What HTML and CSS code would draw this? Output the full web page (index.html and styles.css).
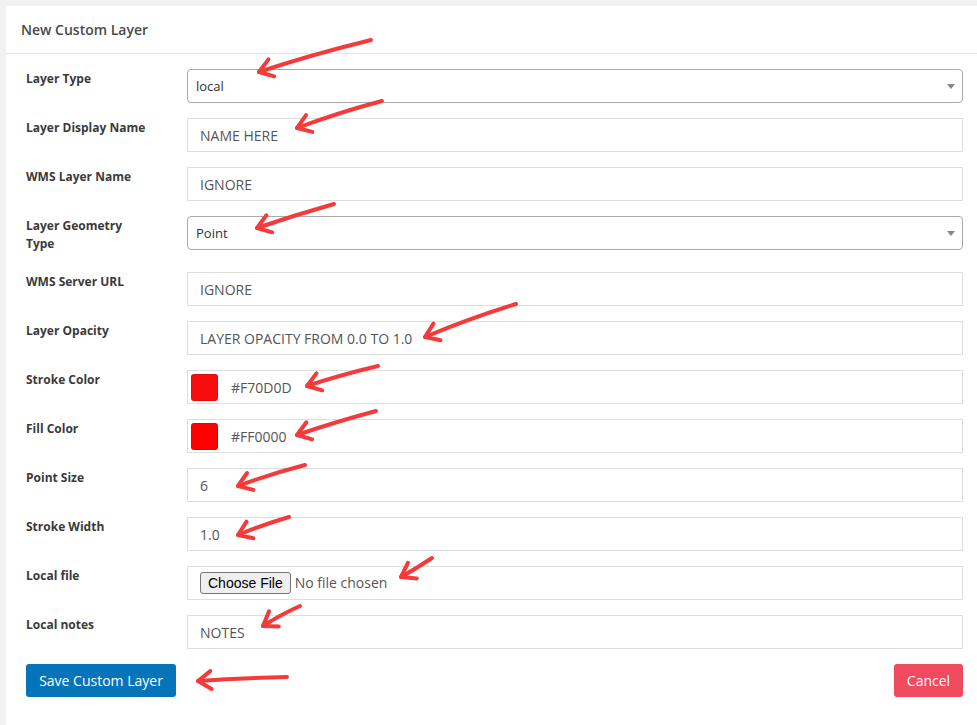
FILE: index.html
```html
<!DOCTYPE html>
<html lang="en">
<head>
  <meta charset="UTF-8">
  <title>New Custom Layer</title>
  <link rel="stylesheet" href="styles.css">
</head>
<body>
  <div class="panel">
    <div class="panel-heading">New Custom Layer</div>

    <form class="panel-body">
      <div class="form-grid">
        <label class="field-label">Layer Type</label>
        <div class="select-wrap">
          <select class="field-select">
            <option>local</option>
          </select>
        </div>

        <label class="field-label">Layer Display Name</label>
        <input class="field-input" type="text" value="NAME HERE">

        <label class="field-label">WMS Layer Name</label>
        <input class="field-input" type="text" value="IGNORE">

        <label class="field-label">Layer Geometry<br>Type</label>
        <div class="select-wrap">
          <select class="field-select">
            <option>Point</option>
          </select>
        </div>

        <label class="field-label">WMS Server URL</label>
        <input class="field-input" type="text" value="IGNORE">

        <label class="field-label">Layer Opacity</label>
        <input class="field-input" type="text" value="LAYER OPACITY FROM 0.0 TO 1.0">

        <label class="field-label">Stroke Color</label>
        <div class="field-input color-field">
          <span class="swatch" style="background:#f70d0d"></span>
          <span>#F70D0D</span>
        </div>

        <label class="field-label">Fill Color</label>
        <div class="field-input color-field">
          <span class="swatch" style="background:#ff0000"></span>
          <span>#FF0000</span>
        </div>

        <label class="field-label">Point Size</label>
        <input class="field-input" type="text" value="6">

        <label class="field-label">Stroke Width</label>
        <input class="field-input" type="text" value="1.0">

        <label class="field-label">Local file</label>
        <div class="field-input file-field">
          <input type="file" class="file-input">
        </div>

        <label class="field-label">Local notes</label>
        <input class="field-input" type="text" value="NOTES">
      </div>

      <div class="actions">
        <button type="button" class="btn btn-save">Save Custom Layer</button>
        <button type="button" class="btn btn-cancel">Cancel</button>
      </div>
    </form>
  </div>

  <!-- annotation arrows drawn over the form -->
  <svg class="arrows" width="977" height="725" viewBox="0 0 977 725">
    <defs>
      <marker id="head" viewBox="0 0 20 20" refX="17" refY="10" markerWidth="20" markerHeight="20"
              orient="auto" markerUnits="userSpaceOnUse" overflow="visible">
        <path d="M4,1 L17,10 L4,19" fill="none" stroke="#f43a3a" stroke-width="4" stroke-linecap="round" stroke-linejoin="round"/>
      </marker>
    </defs>
    <g fill="none" stroke="#f43a3a" stroke-width="4" stroke-linecap="round" marker-end="url(#head)">
      <path d="M371,40 Q310,55 259,72"/>
      <path d="M382,101 Q340,112 297,128"/>
      <path d="M334,204 Q295,215 257,228"/>
      <path d="M516,304 Q470,318 425,337"/>
      <path d="M378,366 Q340,375 307,386"/>
      <path d="M376,411 Q335,422 297,435"/>
      <path d="M305,465 Q270,474 238,486"/>
      <path d="M289,517 Q262,525 238,535"/>
      <path d="M432,558 Q417,568 401,577"/>
      <path d="M300,606 Q280,615 263,626"/>
      <path d="M287,677 Q240,678 198,681"/>
    </g>
  </svg>
</body>
</html>
```

FILE: styles.css
```css
body {
  margin: 0;
  background-color: #f1f1f1;
  font-family: "Open Sans", "Liberation Sans", Arial, sans-serif;
  color: #333;
  position: relative;
  height: 725px;
  overflow: hidden;
}

.panel {
  margin: 6px 0 0 6px;
  background: #fff;
  min-height: 719px;
}

.panel-heading {
  height: 47px;
  line-height: 47px;
  padding: 0 15px;
  border-bottom: 1px solid #e6e6e6;
  font-size: 14px;
  font-weight: 600;
  color: #4a4a4a;
}

.panel-body {
  padding: 15px 14px 0 20px;
}

.form-grid {
  display: grid;
  grid-template-columns: 161px 1fr;
  row-gap: 15px;
}

.field-label {
  font-size: 12px;
  font-weight: 700;
  line-height: 18px;
  color: #3a3a3a;
  padding: 1px 0 4px;
}

.field-input {
  box-sizing: border-box;
  height: 34px;
  width: 100%;
  margin: 0;
  padding: 0 12px;
  border: 1px solid #dedede;
  border-radius: 0;
  background: #fff;
  font-family: "Open Sans", sans-serif;
  font-size: 14px;
  color: #555;
  outline: none;
}

.select-wrap {
  position: relative;
}

.select-wrap::after {
  content: "";
  position: absolute;
  right: 8px;
  top: 15px;
  border-left: 4px solid transparent;
  border-right: 4px solid transparent;
  border-top: 5px solid #888;
  pointer-events: none;
}

.field-select {
  box-sizing: border-box;
  width: 100%;
  height: 34px;
  margin: 0;
  padding: 0 8px;
  border: 1px solid #aaa;
  border-radius: 4px;
  background: #fff;
  appearance: none;
  -webkit-appearance: none;
  font-family: "Open Sans", sans-serif;
  font-size: 13px;
  color: #333;
  outline: none;
}

.color-field {
  display: flex;
  align-items: center;
  padding-left: 3px;
  gap: 13px;
}

.swatch {
  width: 27px;
  height: 27px;
  box-sizing: border-box;
  border: 1px solid rgba(0, 0, 0, 0.08);
  border-radius: 3px;
}

.file-field {
  display: flex;
  align-items: center;
}

.file-input {
  font-family: "Open Sans", sans-serif;
  font-size: 14px;
  color: #555;
}

.file-input::file-selector-button {
  font-family: "Liberation Sans", Arial, sans-serif;
  font-size: 14px;
  color: #000;
  height: 22px;
  padding: 0 7px;
  margin-right: 4px;
  border: 1px solid #767676;
  border-radius: 3px;
  background: #efefef;
}

.actions {
  display: flex;
  justify-content: space-between;
  margin-top: 15px;
}

.btn {
  height: 33px;
  border: none;
  border-radius: 3px;
  color: #fff;
  font-family: "Open Sans", sans-serif;
  font-size: 14px;
  cursor: pointer;
}

.btn-save {
  width: 150px;
  background-color: #0674b9;
}

.btn-cancel {
  width: 69px;
  background-color: #f04a5e;
}

.arrows {
  position: absolute;
  top: 0;
  left: 0;
  pointer-events: none;
}
```
